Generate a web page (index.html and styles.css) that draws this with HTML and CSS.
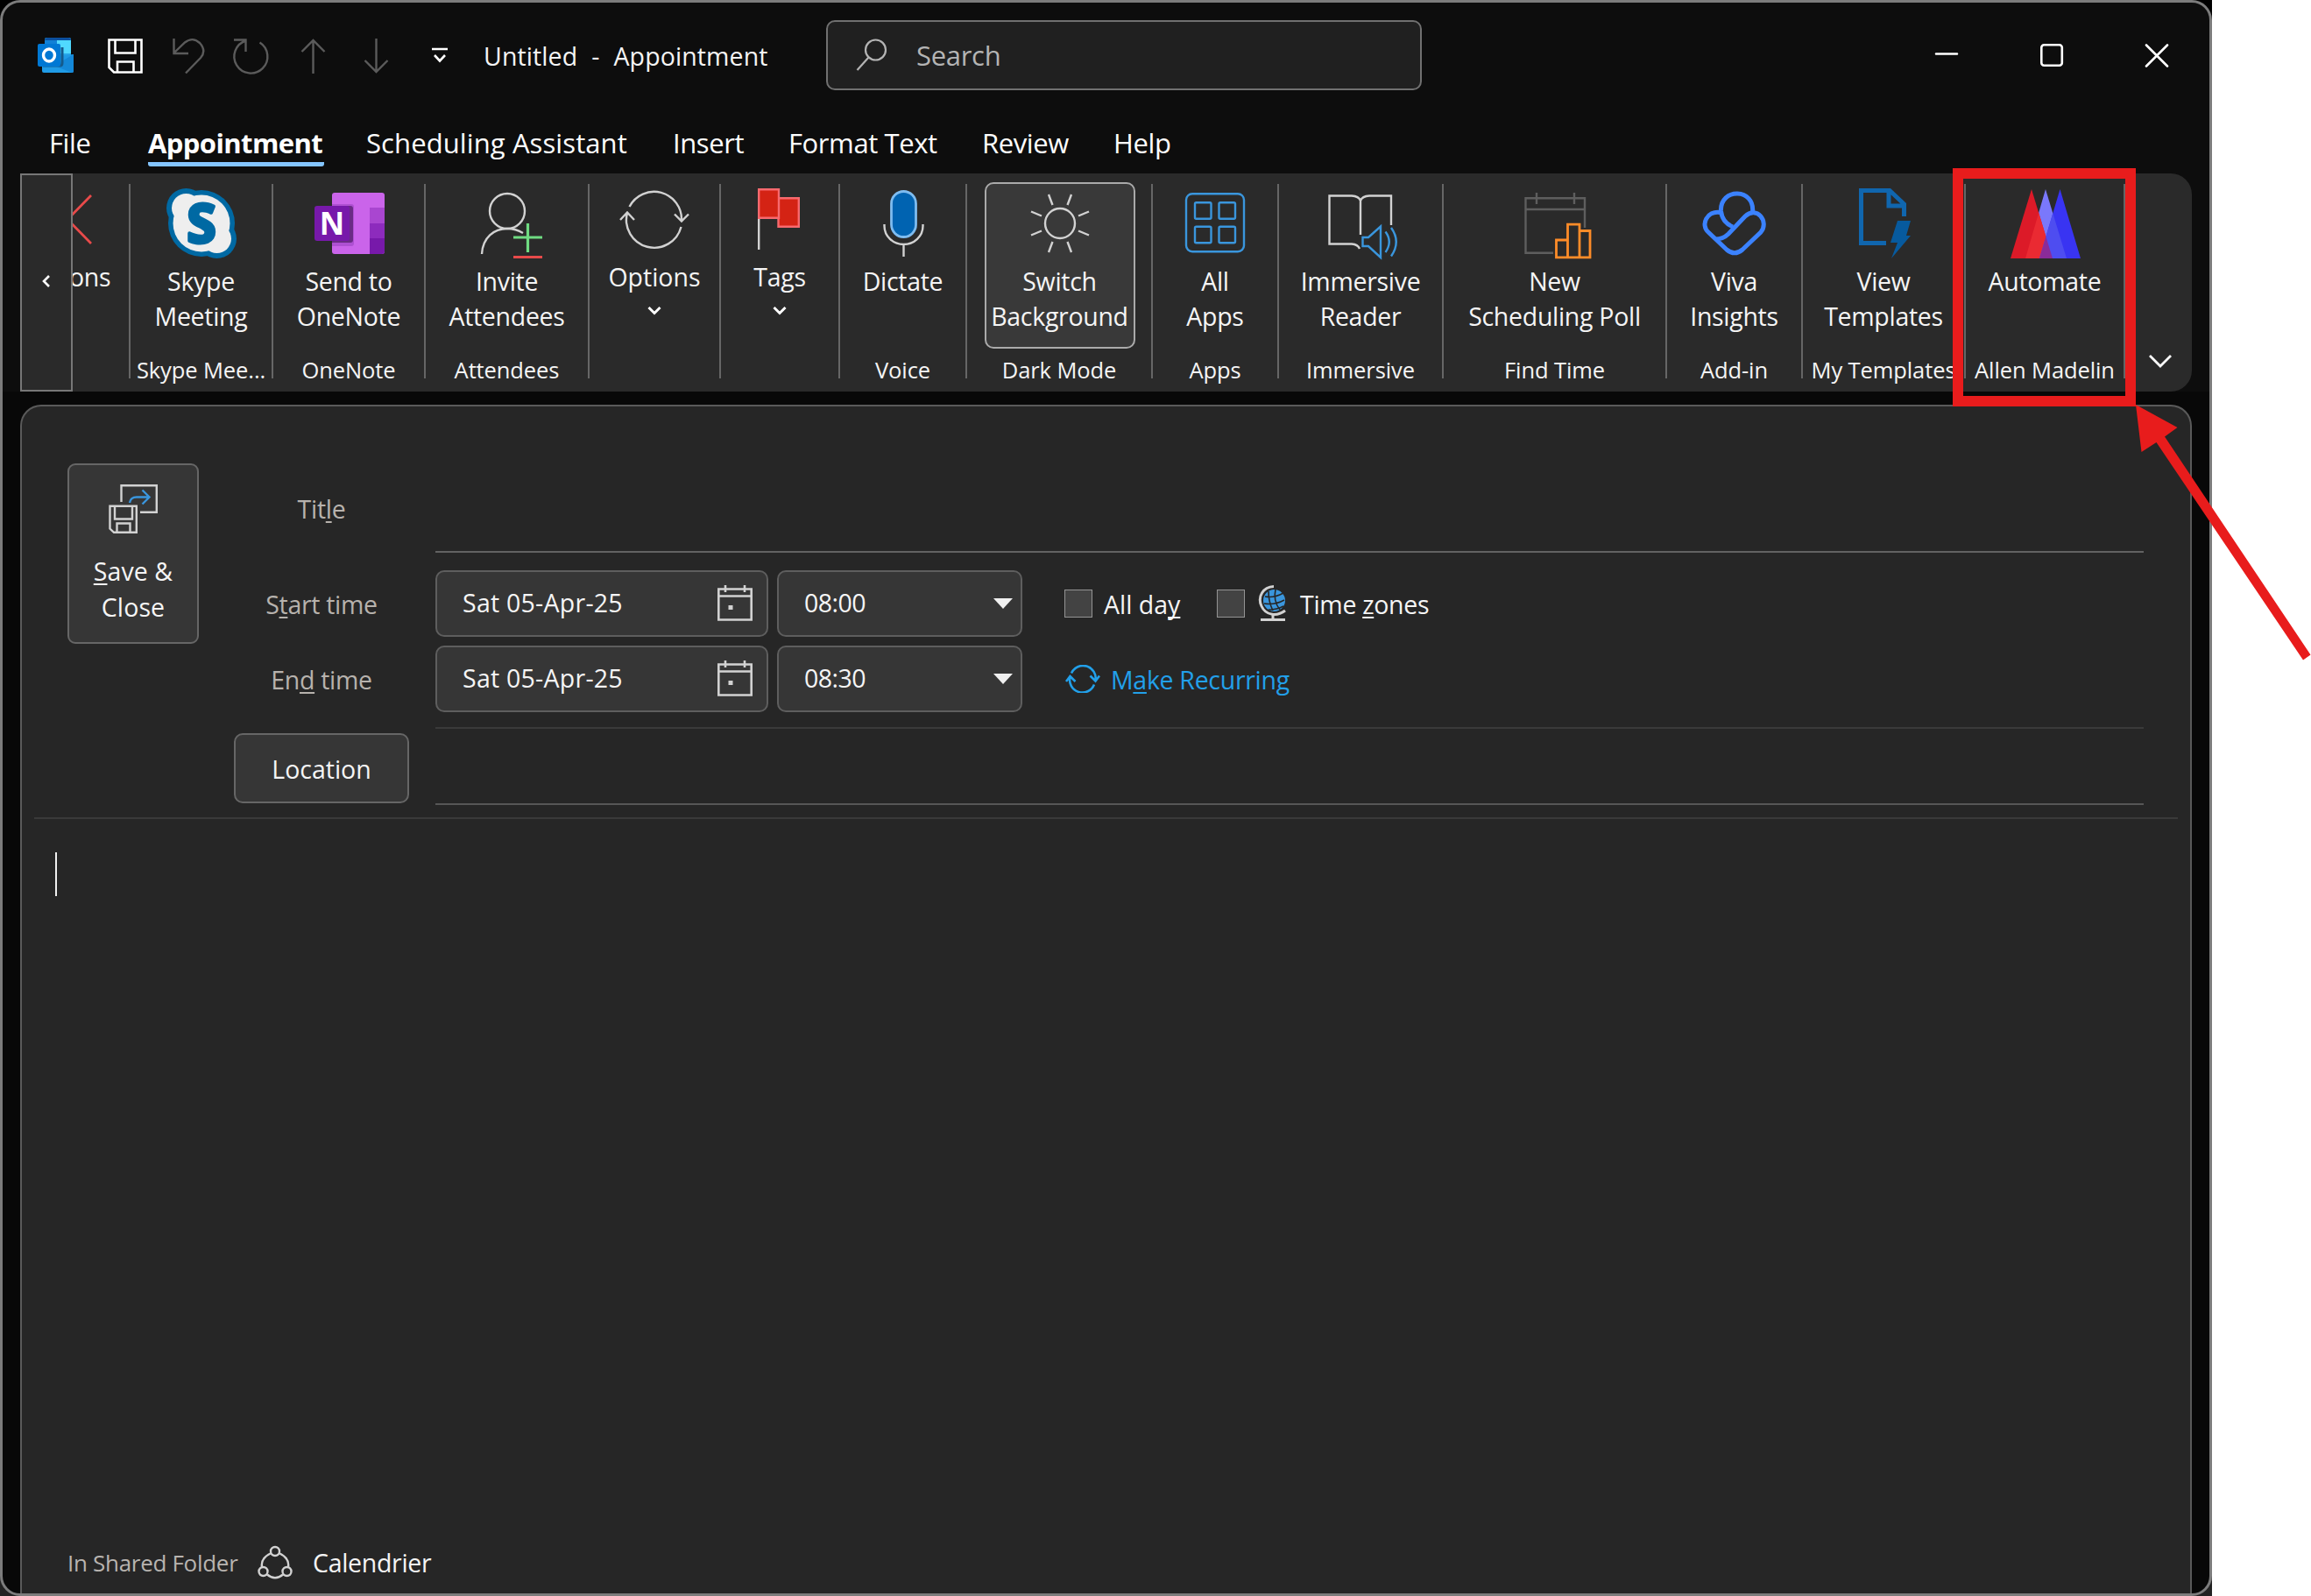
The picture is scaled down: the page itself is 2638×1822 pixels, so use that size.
FILE: index.html
```html
<!DOCTYPE html>
<html lang="en">
<head>
<meta charset="utf-8">
<title>Untitled - Appointment</title>
<link rel="stylesheet" href="styles.css">
</head>
<body>
<div class="desktop">
<div class="window">
  <header class="titlebar">
    <svg class="quick" width="450" height="46" viewBox="43 40 450 46" fill="none">
      <rect x="51" y="43" width="30" height="24" rx="2" fill="#28a8ea"/>
      <path d="M51 46q0-3 3-3h24q3 0 3 3H51z" fill="#0a4f9e"/>
      <path d="M51 46h14v16H51z" fill="#1181d6"/><path d="M65 46h16v15H65z" fill="#50d9ff"/>
      <path d="M48 66L84 62v19q0 2-2 2H50q-2 0-2-2z" fill="#1f9be6"/>
      <path d="M84 62L62 75l20 8q2 0 2-2z" fill="#1488d8"/>
      <path d="M49 75h19q3 0 3-3V54" stroke="#145a8c" stroke-width="3"/>
      <rect x="43" y="50" width="26" height="26" rx="2" fill="#0078d4"/>
      <ellipse cx="56" cy="63" rx="6.5" ry="7" stroke="#fff" stroke-width="3.4"/>
      <g stroke="#fff" stroke-width="2.6">
        <path d="M124.500 45.500H161.500V82.500H130L124.500 77zM131.500 46V60.500H154.500V46M134 82V70.500H152.500V82"/>
      </g>
      <g stroke="#5b5b5b" stroke-width="2.4">
        <path d="M198.500 44V61H215M199 60L211 48.500Q220 41.500 228 49Q236 58 229 66L212 83.500"/>
        <path d="M267 45.500H280.500V59M296.500 48.500A19 19 0 1 1 280.500 46.500"/>
        <path d="M357.500 84V46M344.500 59L357.500 46L370.500 59M429.500 44V82M416.500 69L429.500 82L442.500 69"/>
      </g>
    </svg>
    <svg class="customize" width="20" height="18" viewBox="0 0 20 18" fill="none" stroke="#fff" stroke-width="2.6"><path d="M1 2H19M4 9L10 15.500L16 9"/></svg>
    <div class="doc-title"><span>Untitled</span><span>-</span><span>Appointment</span></div>
    <div class="search">
      <svg width="36" height="38" viewBox="0 0 36 38" fill="none" stroke="#b4b4b4" stroke-width="2.2"><circle cx="22.500" cy="13" r="11.500"/><path d="M14.500 21.500L1.500 36"/></svg>
      <span>Search</span>
    </div>
    <svg class="controls" width="268" height="30" viewBox="2208 48 268 30" fill="none" stroke="#fff" stroke-width="2.6" stroke-linecap="round"><path d="M2210 61.500H2234M2450 51.500L2474 75.500M2474 51.500L2450 75.500"/><rect x="2330.300" y="51.300" width="23.500" height="23.500" rx="3"/></svg>
  </header>

  <nav class="tabs">
    <span>File</span><span class="active">Appointment</span><span class="long">Scheduling Assistant</span><span>Insert</span><span>Format Text</span><span>Review</span><span>Help</span>
  </nav>

  <section class="ribbon">
    <div class="scroll-left"><svg width="12" height="16" viewBox="0 0 12 16" fill="none" stroke="#fff" stroke-width="2.600"><path d="M9 2L3 8L9 14"/></svg></div>
    <div class="group cut">
      <svg class="icon" viewBox="83 198 100 103" fill="none" stroke="#e84a4a" stroke-width="2.800"><path d="M104 223L77 250.500L104 278"/></svg>
      <div class="cmd">ons</div>
    </div>
    <div class="group w-skype">
      <svg class="icon" viewBox="-50 198 100 103">
        <g fill="#0069a3"><circle cx="0" cy="255" r="38"/><circle cx="-17.500" cy="237.500" r="22.500"/><circle cx="17.500" cy="272.500" r="22.500"/></g>
        <g fill="#eee"><circle cx="0" cy="255" r="32.500"/><circle cx="-17.500" cy="237.500" r="16.500"/><circle cx="17.500" cy="272.500" r="16.500"/></g>
        <text class="mark" x="0" y="277" font-size="60" fill="#0069a3" stroke="#0069a3" stroke-width="4">S</text>
      </svg>
      <div class="cmd">Skype<br>Meeting</div><div class="name">Skype Mee...</div>
    </div>
    <div class="group w-onenote">
      <svg class="icon" viewBox="-50 198 100 103">
        <rect x="-19" y="220" width="60" height="70" rx="3" fill="#ca64ea"/>
        <path d="M24 237H41V255H24z" fill="#a946d0"/><path d="M24 255H41V272H24z" fill="#8d2bbd"/><path d="M24 272H41V287q0 3-3 3H24z" fill="#7719aa"/>
        <path d="M-19 233H3q3 0 3 3v42q0 3-3 3h-22z" fill="#ae50d2"/><path d="M-19 235H2q3 0 3 3v36q0 3-3 3h-21z" fill="#6a2b85"/>
        <rect x="-39" y="235" width="40" height="40" rx="3" fill="#7719aa"/>
        <text class="mark" x="-19" y="267.500" font-size="35" fill="#fff">N</text>
      </svg>
      <div class="cmd">Send to<br>OneNote</div><div class="name">OneNote</div>
    </div>
    <div class="group w-invite">
      <svg class="icon" viewBox="-50 198 100 103" fill="none" stroke="#d2d2d2" stroke-width="2.400">
        <circle cx="0" cy="241" r="20"/><path d="M-29 290C-28 271-15 261 0 261Q10 261 18 266"/>
        <path d="M7 271H40M23.500 255V288" stroke="#6fdc82" stroke-width="3.200"/><path d="M7 293.500H40" stroke="#e84a4a" stroke-width="3.200"/>
      </svg>
      <div class="cmd">Invite<br>Attendees</div><div class="name">Attendees</div>
    </div>
    <div class="group w-options high">
      <svg class="icon" viewBox="-50 199 100 103" fill="none" stroke="#d2d2d2" stroke-width="2.400">
        <path d="M-28.500 237A31.500 31.500 0 0 1 31 253M23 245.500L31 253.500L39 245.500M30.500 260A31.500 31.500 0 0 1-31 244M-39 252L-31 243.500L-23 252"/>
      </svg>
      <div class="cmd">Options</div><svg class="chev" width="16" height="12" viewBox="0 0 16 12"><path d="M1.500 2L8 8.500L14.500 2"/></svg>
    </div>
    <div class="group w-tags high">
      <svg class="icon" viewBox="-50 198 100 103" fill="#d42314" stroke="#f7696e" stroke-width="2.400">
        <path d="M-23.800 249V285" stroke="#d2d2d2"/><path d="M-1.500 226.200H21.800V258.800H-1.500z"/><path d="M-23.800 216.200H-1V248.800H-23.800z"/>
      </svg>
      <div class="cmd">Tags</div><svg class="chev" width="16" height="12" viewBox="0 0 16 12"><path d="M1.500 2L8 8.500L14.500 2"/></svg>
    </div>
    <div class="group w-dictate">
      <svg class="icon" viewBox="-50 198 100 103" fill="none" stroke="#d2d2d2" stroke-width="2.400">
        <rect x="-13.500" y="218.500" width="28" height="52" rx="14" fill="#0063b1" stroke="#7ebcf0" stroke-width="2.800"/><path d="M-21.500 256V258A22 21 0 0 0 22.500 258V256M.5 279V293"/>
      </svg>
      <div class="cmd">Dictate</div><div class="name">Voice</div>
    </div>
    <div class="group w-dark">
      <div class="pressed">
        <svg class="icon" viewBox="-50 209 100 92" fill="none" stroke="#d2d2d2" stroke-width="2.400">
          <circle cx="0" cy="255" r="17"/><path d="M-13 222L-8.500 234M13 222L8.500 234M-13 288L-8.500 276M13 288L8.500 276M-33 241.500L-21 246.500M33 241.500L21 246.500M-33 268.500L-21 263.500M33 268.500L21 263.500"/>
        </svg>
        <div class="cmd">Switch<br>Background</div>
      </div>
      <div class="name">Dark Mode</div>
    </div>
    <div class="group w-apps">
      <svg class="icon" viewBox="-50 198 100 103" fill="none" stroke="#3a96dd" stroke-width="2.400">
        <rect x="-33" y="221.200" width="66" height="66" rx="7"/><rect x="-23" y="231.200" width="18.500" height="18.500" rx="1.500"/><rect x="4.500" y="231.200" width="18.500" height="18.500" rx="1.500"/><rect x="-23" y="258.700" width="18.500" height="18.500" rx="1.500"/><rect x="4.500" y="258.700" width="18.500" height="18.500" rx="1.500"/>
      </svg>
      <div class="cmd">All<br>Apps</div><div class="name">Apps</div>
    </div>
    <div class="group w-reader">
      <svg class="icon" viewBox="-50 198 100 103" fill="none" stroke="#d2d2d2" stroke-width="2.400">
        <path d="M35 257V223.500H10Q2 224 0 229Q-2 224-10 223.500H-35.500V278.500H-10Q-3 279-1 284M0 229V268"/>
        <path d="M23 258.500V294L9 281H2.500V271H9zM28.500 264.500Q37 276 28.500 288M35 260Q46.500 276 35 292.500" stroke="#3a96dd"/>
      </svg>
      <div class="cmd">Immersive<br>Reader</div><div class="name">Immersive</div>
    </div>
    <div class="group w-poll">
      <svg class="icon" viewBox="-50 198 100 103" fill="none" stroke="#5e5e5e" stroke-width="2.400">
        <path d="M34 260V226.200H-33.500V288.800H-2M-33.500 239H34M-21 220V233M22 220V233"/>
        <path d="M1.500 293.800V274H14.500V293.800zM14.500 293.800V256.200H28V293.800zM28 293.800V263.500H40V293.800z" stroke="#ff8c28" stroke-width="2.800"/>
      </svg>
      <div class="cmd">New<br>Scheduling Poll</div><div class="name">Find Time</div>
    </div>
    <div class="group w-viva">
      <svg class="icon" viewBox="-50 198 100 103" fill="none" stroke="#3b82ff" stroke-width="5">
        <path d="M-16 242.500C-32 240-39 257-30 265L-9 285Q0 292.500 9 285L30 265C40 253 25 234 12 247L-7 267Q-13 273-22 273"/><path d="M20.500 243C24 214-17 214-15.500 241Q-14 254-2 259"/>
      </svg>
      <div class="cmd">Viva<br>Insights</div><div class="name">Add-in</div>
    </div>
    <div class="group w-view">
      <svg class="icon" viewBox="-50 198 100 103" fill="none" stroke="#1066ae" stroke-width="5">
        <path d="M3 277.500H-25.500V217.500H7L23.500 233V247M6 217V235H24"/><path d="M16 252H31L26 269H31L9 295L16 277H8z" fill="#075a9e" stroke="none"/>
      </svg>
      <div class="cmd">View<br>Templates</div><div class="name">My Templates</div>
    </div>
    <div class="group w-auto">
      <svg class="icon" viewBox="-50 198 100 103">
        <clipPath id="red"><path d="M-15 216L9 295H-39z"/></clipPath><clipPath id="blue"><path d="M17.500 216L41 295H-6z"/></clipPath>
        <path d="M1 216L25 295H-22z" fill="#7a78fb"/><path d="M-15 216L9 295H-39z" fill="#dc1a28"/><path d="M17.500 216L41 295H-6z" fill="#3934f2"/>
        <path d="M1 216L25 295H-22z" fill="#ea2a32" clip-path="url(#red)"/><path d="M1 216L25 295H-22z" fill="#4e4df0" clip-path="url(#blue)"/><path d="M17.500 216L41 295H-6z" fill="#8a2b98" clip-path="url(#red)"/>
      </svg>
      <div class="cmd">Automate</div><div class="name">Allen Madelin</div>
    </div>
    <svg class="expand" width="28" height="18" viewBox="0 0 28 18" fill="none" stroke="#fff" stroke-width="2.800"><path d="M2 2L14 14L26 2"/></svg>
  </section>

  <main class="panel">
    <div class="form">
      <div class="save">
        <svg width="58" height="58" viewBox="124 552 58 58" fill="none" stroke="#d2d2d2" stroke-width="2.400"><path d="M139.500 573V554.200H179.800V584.800H161"/><path d="M126.500 577.700H156.800V607.800H131L126.500 603.500zM132 578V592.500H152V578M134.500 607.500V597.500H149.500V607.500"/><path d="M149 574Q150 567.500 157 567.500H171.500M163.500 559.500L171.500 567.500L163.500 575.500" stroke="#3a96dd"/></svg>
        <div><u>S</u>ave &amp;<br>Close</div>
      </div>
      <div class="fields">
        <label class="title-label">Tit<u>l</u>e</label><div class="title-input"></div>
        <label>S<u>t</u>art time</label>
        <div class="when">
          <div class="box date"><span>Sat 05-Apr-25</span><svg width="40" height="42" viewBox="0 0 40 42" fill="none" stroke="#d2d2d2" stroke-width="2.600"><path d="M1.300 4.500H38.700V39.500H1.300zM1.300 12.500H38.700M9 0V8M31 0V8"/><path d="M12.500 23h5v5h-5z" fill="#d2d2d2" stroke="none"/></svg></div>
          <div class="box time"><span>08:00</span><i></i></div>
          <div class="check"></div><span class="allday">All da<u>y</u></span><div class="check"></div>
          <svg class="globe" width="34" height="42" viewBox="0 0 34 42" fill="none"><circle cx="18.500" cy="17.500" r="12.500" fill="#3a96dd"/><path d="M8 13Q18 15 29 9M7 21Q19 23 30 17M12 28Q22 28 29 24M12 7Q12 19 17 29M20 5Q17 18 25 28" stroke="#262626" stroke-width="1.600"/><path d="M18 1.500C6 2-1 13 4 24S22 36 31 29M17 33V39M3 39.500H31" stroke="#d2d2d2" stroke-width="3"/></svg>
          <span class="zones">Time <u>z</u>ones</span>
        </div>
        <label>En<u>d</u> time</label>
        <div class="when">
          <div class="box date"><span>Sat 05-Apr-25</span><svg width="40" height="42" viewBox="0 0 40 42" fill="none" stroke="#d2d2d2" stroke-width="2.600"><path d="M1.300 4.500H38.700V39.500H1.300zM1.300 12.500H38.700M9 0V8M31 0V8"/><path d="M12.500 23h5v5h-5z" fill="#d2d2d2" stroke="none"/></svg></div>
          <div class="box time"><span>08:30</span><i></i></div>
          <svg class="recur" width="40" height="32" viewBox="0 0 40 32" fill="none" stroke="#22a0ea" stroke-width="2.600"><path d="M7 9.500A14.500 14.500 0 0 1 34.500 18M28.500 12.500L34.500 18.500L39 12.500M33 22.500A14.500 14.500 0 0 1 5.500 13.500M1 19L5.500 13L11.500 19"/></svg>
          <span class="link">M<u>a</u>ke Recurring</span>
        </div>
        <div class="location">Location</div><div class="location-input"></div>
      </div>
    </div>
    <div class="editor"><div class="caret"></div></div>
    <footer class="status">
      <span class="in">In Shared Folder</span>
      <svg width="40" height="40" viewBox="0 0 40 40" fill="none" stroke="#d2d2d2" stroke-width="2.400"><circle cx="20" cy="7" r="5"/><circle cx="6.500" cy="30" r="5"/><circle cx="33.500" cy="30" r="5"/><path d="M15.500 9C7 13 4 19 5 25M24.500 9C33 13 36 19 35 25M11 33.500Q20 41 29 33.500"/></svg>
      <span class="cal">Calendrier</span>
    </footer>
  </main>
</div>
<div class="highlight"></div>
<svg class="arrow" width="204" height="296" viewBox="2434 460 204 296"><path d="M2438 462L2485.500 488L2471 498.500L2637.500 747.500L2629 753.500L2461.500 505L2444.500 516z" fill="#e81c1c"/></svg>
</div>
</body>
</html>
```
FILE: styles.css
```css
* { box-sizing: border-box; }
body { margin: 0; background: #fff; color: #f5f5f5; font: 28.5px/40px "Open Sans", "Noto Sans", sans-serif; letter-spacing: -0.3px; overflow: hidden; }
svg { display: block; flex: none; }
u { text-decoration-thickness: 1.5px; text-underline-offset: 3px; text-decoration-skip-ink: none; }
.desktop { position: relative; width: 2525px; height: 1822px; background: linear-gradient(#000 50%, #222 50%); }
.window { height: 1822px; border: 3px solid #7c7c7c; border-radius: 23px; background: linear-gradient(#0d0d0d 444px, #080808 444px); overflow: hidden; display: flex; flex-direction: column; }

.titlebar { height: 125px; padding: 0 46px 5px 40px; display: flex; align-items: center; white-space: nowrap; }
.customize { margin-left: -1px; }
.doc-title { display: flex; gap: 16px; margin-left: 40px; width: 391px; padding-top: 2px; letter-spacing: 0.1px; }
.search { width: 680px; height: 80px; border: 2px solid #707070; border-radius: 10px; background: #202020; color: #b4b4b4; font-size: 31px; display: flex; align-items: center; padding-left: 32px; gap: 33px; }
.controls { margin-left: auto; }

.tabs { height: 70px; padding-left: 53px; display: grid; grid-template-columns: 113px 249px 350px 132px 221px 150px 100px; font-size: 31px; line-height: 70px; letter-spacing: -0.4px; white-space: nowrap; color: #fff; }
.tabs .active { font-weight: 700; letter-spacing: -0.6px; width: 201px; height: 62px; border-bottom: 5px solid #84c5ff; border-radius: 3px; }
.tabs .long { letter-spacing: 0.1px; }

.ribbon { margin: 0 20px; height: 249px; flex: none; background: #2a2a2a; border-radius: 0 24px 24px 0; display: flex; }
.scroll-left { width: 60px; border: 2px solid #777; display: flex; align-items: center; justify-content: center; }
.scroll-left svg { margin-top: -4px; }
.group { display: flex; flex-direction: column; align-items: center; padding-right: 2px; text-align: center; white-space: nowrap; background: linear-gradient(#666, #666) right 12px / 2px 222px no-repeat; }
.icon { width: 100px; height: 103px; }
.cmd { height: 103px; }
.name { height: 36px; line-height: 36px; font-size: 25.5px; letter-spacing: -0.1px; }
.high .icon { margin-bottom: -5px; }
.high .cmd { height: 53px; }
.w-options .cmd { letter-spacing: 0; }
.chev { fill: none; stroke: #fff; stroke-width: 3; }
.mark { font-weight: 700; text-anchor: middle; letter-spacing: 0; stroke-linejoin: round; }
.pressed { width: 172px; height: 190px; margin: 10px 0 6px 1px; border: 2px solid #aaa; border-radius: 10px; background: #393939; display: flex; flex-direction: column; align-items: center; }
.pressed .icon { height: 92px; margin-top: -1px; }
.pressed .cmd { height: 80px; }
.cut { width: 66px; overflow: hidden; align-items: flex-start; }
.cut .icon { margin-bottom: -5px; }
.cut .cmd { margin-left: -4px; }
.w-skype { width: 163px; } .w-onenote { width: 174px; } .w-invite { width: 187px; }
.w-options { width: 150px; } .w-tags { width: 136px; } .w-dictate { width: 145px; }
.w-dark { width: 212px; } .w-apps { width: 144px; } .w-reader { width: 188px; }
.w-poll { width: 255px; } .w-viva { width: 155px; } .w-view { width: 186px; } .w-auto { width: 182px; }
.expand { margin: 206px 0 0 26px; }

.panel { margin: 15px 20px 0; flex: 1; border: 2px solid #5a5a5a; border-bottom: 0; border-radius: 24px 24px 0 0; background: #262626; display: flex; flex-direction: column; padding: 0 14px; }
.form { height: 471px; border-bottom: 2px solid #3a3a3a; padding: 65px 39px 0 38px; display: flex; gap: 40px; }
.save { width: 150px; height: 206px; border: 2px solid #666; border-radius: 9px; background: #363636; display: flex; flex-direction: column; align-items: center; gap: 22px; padding-top: 21px; text-align: center; line-height: 41px; letter-spacing: 0.1px; }
.fields { flex: 1; display: grid; grid-template-columns: 200px 1fr; column-gap: 30px; grid-template-rows: 122px 86px 93px 89px; }
.fields label { color: #b7b2ad; text-align: center; line-height: 40px; padding-top: 19px; }
.fields .title-label { padding-top: 32px; }
.title-input { height: 102px; border-bottom: 2px solid #626262; }
.when { display: flex; align-items: center; height: 76px; white-space: nowrap; }
.box { height: 76px; border: 2px solid #5e5e5e; border-radius: 10px; background: #363636; display: flex; align-items: center; justify-content: space-between; }
.box span { padding-bottom: 2px; letter-spacing: -0.5px; }
.box.date span { letter-spacing: 0.25px; }
.date { width: 380px; padding: 0 16px 0 29px; }
.time { width: 280px; margin-left: 10px; padding: 0 9px 0 29px; }
.time i { border: 11px solid transparent; border-top: 12px solid #f0f0f0; border-bottom: 0; }
.check { width: 32px; height: 32px; border: 1.500px solid #949494; background: #434343; }
.time + .check { margin-left: 48px; }
.allday { width: 129px; margin-left: 13px; padding-top: 2px; letter-spacing: 0; }
.globe { margin-left: 15px; }
.zones { margin-left: 14px; padding-top: 2px; }
.recur { margin-left: 49px; }
.link { margin-left: 12px; padding-top: 2px; color: #22a0ea; }
.location { height: 80px; margin-top: 7px; border: 2px solid #666; border-radius: 10px; background: #363636; text-align: center; line-height: 78px; letter-spacing: 0; }
.location-input { border-top: 2px solid #3a3a3a; border-bottom: 2px solid #565656; }
.editor { flex: 1; padding: 38px 0 0 24px; }
.caret { width: 2px; height: 50px; background: #f0f0f0; }
.status { height: 74px; display: flex; align-items: center; padding: 4px 0 0 38px; }
.status .in { width: 217px; font-size: 26px; color: #b8b4b0; }
.status .cal { margin-left: 23px; }

.highlight { position: absolute; left: 2229px; top: 192px; width: 209px; height: 272px; border: 12.500px solid #e81c1c; }
.arrow { position: absolute; left: 2434px; top: 460px; }
```
